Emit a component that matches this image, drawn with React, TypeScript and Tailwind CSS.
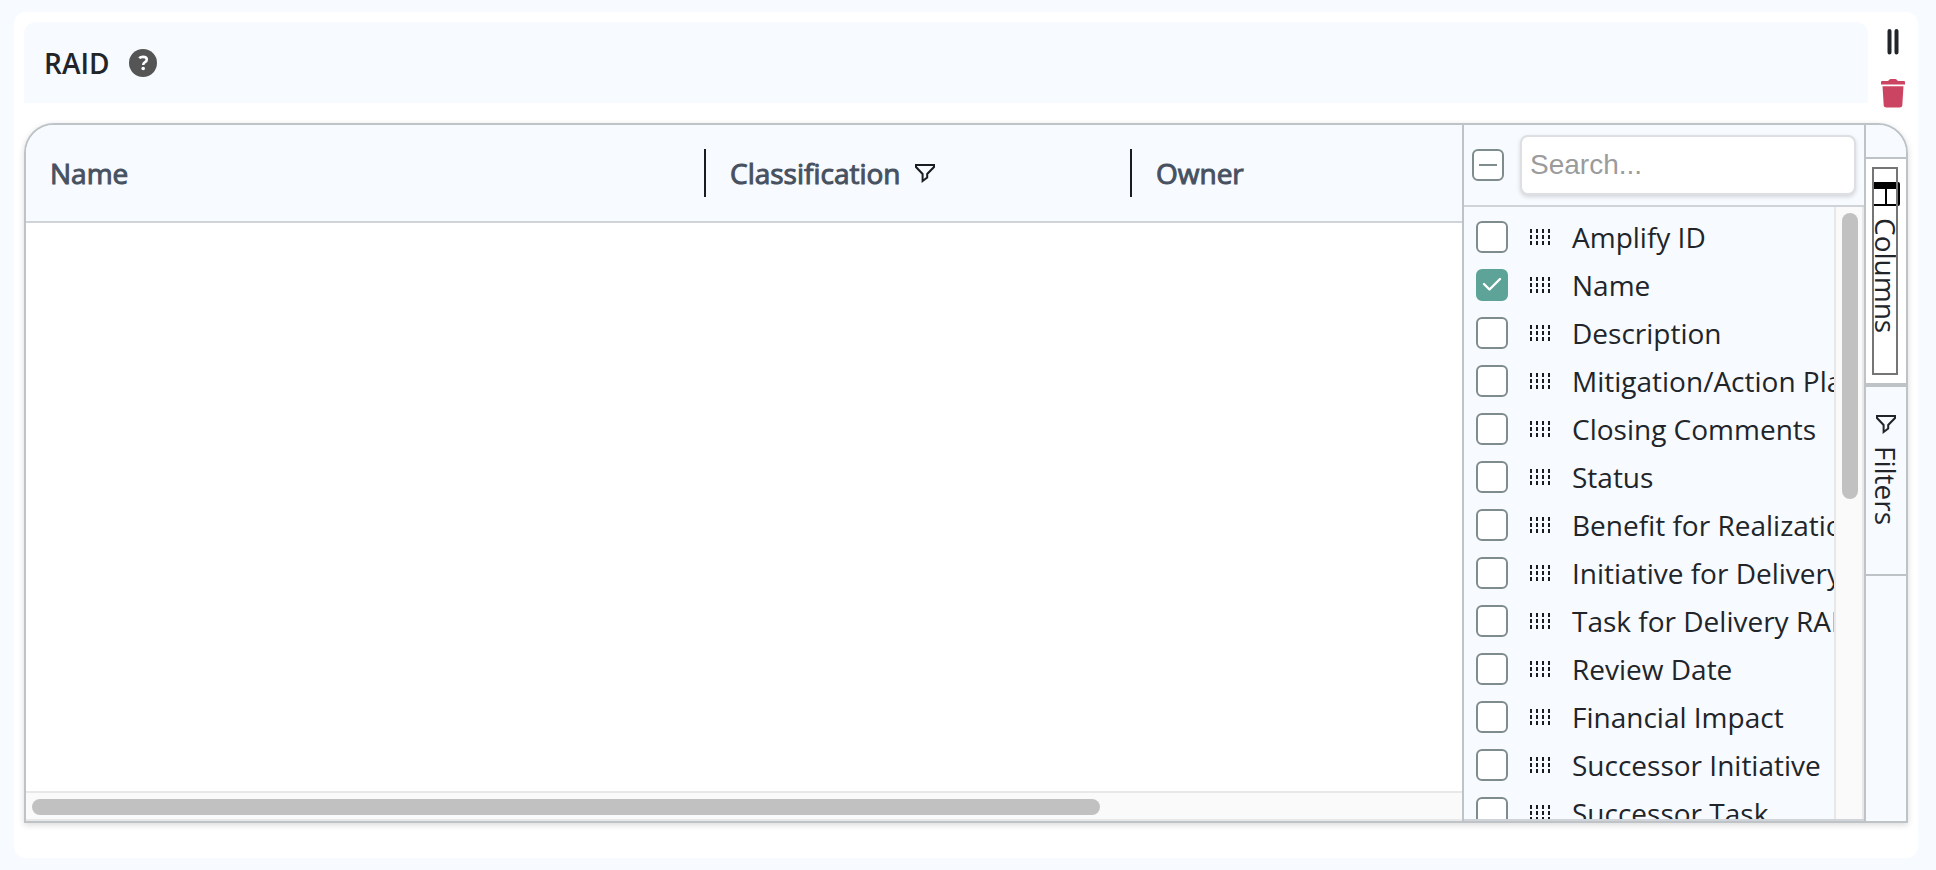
import { useState } from 'react';

interface Field {
  label: string;
  visible: boolean;
}

const FIELDS: Field[] = [
  { label: 'Amplify ID', visible: false },
  { label: 'Name', visible: true },
  { label: 'Description', visible: false },
  { label: 'Mitigation/Action Plan', visible: false },
  { label: 'Closing Comments', visible: false },
  { label: 'Status', visible: false },
  { label: 'Benefit for Realization RAID', visible: false },
  { label: 'Initiative for Delivery RAID', visible: false },
  { label: 'Task for Delivery RAID', visible: false },
  { label: 'Review Date', visible: false },
  { label: 'Financial Impact', visible: false },
  { label: 'Successor Initiative', visible: false },
  { label: 'Successor Task', visible: false },
];

function FilterIcon() {
  return (
    <svg viewBox="0 0 20 20" className="size-5 shrink-0" fill="none" stroke="currentColor" strokeWidth="2" aria-hidden="true">
      <path d="M0 2H20" />
      <path d="M1 2V4L7.600 11V18L12.200 14.600V11L19 4V2" />
    </svg>
  );
}

function ColumnsIcon() {
  return (
    <svg viewBox="0 0 26 24" className="h-6 w-[26px] shrink-0" aria-hidden="true">
      <path d="M0 0H24Q26 0 26 2V22Q26 24 24 24H0V22H11V7H0ZM13 7V22H22V7Z" fillRule="evenodd" />
    </svg>
  );
}

function GripIcon() {
  return (
    <svg viewBox="0 0 20 16" className="h-4 w-5 shrink-0 text-[#181d1f]" aria-hidden="true">
      <path d="M1 0V16M7 0V16M13 0V16M19 0V16" stroke="currentColor" strokeWidth="2" strokeDasharray="4 2" />
    </svg>
  );
}

function TrashIcon() {
  return (
    <svg viewBox="0 0 24 29" className="h-[29px] w-6" fill="currentColor" aria-hidden="true">
      <path d="M1 2H7L8.500 .5Q9 0 9.600 0H14.400Q15 0 15.500 .5L17 2H23Q24 2 24 3V5.500H0V3Q0 2 1 2Z" />
      <path d="M1.500 7.300H22.500L21.300 26.200Q21.100 28.600 18.700 28.600H5.300Q2.900 28.600 2.700 26.200Z" />
    </svg>
  );
}

function Checkbox({ label, checked, onChange }: { label: string; checked: boolean; onChange: () => void }) {
  return (
    <span className="grid size-8 shrink-0">
      <input
        type="checkbox"
        aria-label={label}
        checked={checked}
        onChange={onChange}
        className="col-start-1 row-start-1 size-8 appearance-none rounded-md border-2 border-[#7f8c8d] bg-white checked:border-[#5da398] checked:bg-[#5da398]"
      />
      {checked && (
        <svg viewBox="0 0 32 32" className="pointer-events-none col-start-1 row-start-1 size-8" fill="none" aria-hidden="true">
          <path d="M8 15L13.500 20.500L24 10" stroke="white" strokeWidth="2.400" strokeLinecap="round" strokeLinejoin="round" />
        </svg>
      )}
    </span>
  );
}

export default function App() {
  const [fields, setFields] = useState(FIELDS);
  const [search, setSearch] = useState('');

  const toggle = (label: string) =>
    setFields((list) => list.map((f) => (f.label === label ? { ...f, visible: !f.visible } : f)));

  const toggleAll = () =>
    setFields((list) => {
      const all = list.every((f) => f.visible);
      return list.map((f) => ({ ...f, visible: !all }));
    });

  const shown = fields.filter((f) => f.label.toLowerCase().includes(search.toLowerCase()));

  return (
    <div className="flex h-screen bg-[#f7faff] py-3 pl-3.5 pr-[18px] font-['Open_Sans',sans-serif] text-[28px] leading-9 text-[#212529]">
      <main className="flex min-w-0 flex-1 flex-col rounded-xl bg-white pl-2.5">
        <div className="flex">
          <header className="mb-5 mt-2.5 flex flex-1 items-center gap-5 rounded-t-xl bg-[#f7faff] px-5 pb-[22px] pt-[23px]">
            <h1 className="font-semibold">RAID</h1>
            <button type="button" aria-label="Help" className="text-[#555]">
              <svg viewBox="0 0 28 28" className="size-7" aria-hidden="true">
                <circle cx="14" cy="14" r="14" fill="currentColor" />
                <path d="M10.200 9.200Q11.500 7.900 14 7.900Q17.800 7.900 17.800 10.600Q17.800 12.200 16 13.200Q14.200 14.200 14.200 16" fill="none" stroke="white" strokeWidth="2.600" />
                <circle cx="14.200" cy="19.500" r="1.800" fill="white" />
              </svg>
            </button>
          </header>
          <div className="flex w-[50px] flex-col items-center gap-6 pt-[17px]">
            <button type="button" aria-label="Move">
              <svg viewBox="0 0 12 26" className="h-[26px] w-3" aria-hidden="true">
                <path d="M2.500 2V23.500M9.500 2V23.500" stroke="currentColor" strokeWidth="4" strokeLinecap="round" />
              </svg>
            </button>
            <button type="button" aria-label="Delete" className="text-[#cb4563]">
              <TrashIcon />
            </button>
          </div>
        </div>

        <section className="mb-[35px] mr-2.5 flex min-h-0 flex-1 overflow-hidden rounded-t-[30px] border-2 border-[#bdc3c7] shadow-[0_2px_6px_rgba(0,0,0,0.15)]">
          <div className="flex min-w-0 flex-1 flex-col">
            <table className="w-full table-fixed border-b-2 border-[#d0d3d7] bg-[#f7faff] text-left text-[#475160]">
              <colgroup>
                <col className="w-[680px]" />
                <col className="w-[426px]" />
                <col />
              </colgroup>
              <thead>
                <tr>
                  <th className="py-6 pl-6 font-normal">
                    <div className="flex h-12 items-center border-r-2 border-[#181d1f] [-webkit-text-stroke:1px]">Name</div>
                  </th>
                  <th className="py-6 pl-6 font-normal">
                    <div className="flex h-12 items-center gap-3.5 border-r-2 border-[#181d1f]">
                      <span className="[-webkit-text-stroke:1px]">Classification</span>
                      <button type="button" aria-label="Filter Classification" className="text-[#181d1f]">
                        <FilterIcon />
                      </button>
                    </div>
                  </th>
                  <th className="py-6 pl-6 font-normal">
                    <div className="flex h-12 items-center [-webkit-text-stroke:1px]">Owner</div>
                  </th>
                </tr>
              </thead>
            </table>
            <div className="flex-1" />
            <div className="border-y-2 border-[#e8e8e8] bg-[#fafafa] px-1.5 pb-1 pt-1.5">
              <div className="h-4 w-3/4 rounded-full bg-[#c1c1c1]" />
            </div>
          </div>

          <aside className="flex w-[404px] shrink-0 flex-col border-x-2 border-[#bdc3c7] bg-[#f7faff]">
            <div className="flex items-center gap-4 border-b-2 border-[#d0d3d7] px-2 py-2.5">
              <button
                type="button"
                aria-label="Toggle all columns"
                onClick={toggleAll}
                className="grid size-8 shrink-0 place-items-center rounded-md border-2 border-[#7f8c8d] bg-white"
              >
                <span className="h-0.5 w-[18px] bg-[#7f8c8d]" />
              </button>
              <input
                type="text"
                aria-label="Search columns"
                placeholder="Search..."
                value={search}
                onChange={(e) => setSearch(e.target.value)}
                className="h-[60px] min-w-0 flex-1 rounded-lg border-2 border-[#dddfe2] bg-white px-2 font-['Liberation_Sans',sans-serif] shadow-[0_2px_4px_rgba(0,0,0,0.15)] placeholder:text-[#9b9b9b]"
              />
            </div>
            <div className="flex min-h-0 flex-1 border-b-2 border-[#d0d3d7]">
              <ul className="min-w-0 flex-1 overflow-hidden pl-3 pt-1.5">
                {shown.map((f) => (
                  <li key={f.label} className="flex h-12 items-center gap-[22px] whitespace-nowrap">
                    <Checkbox label={f.label} checked={f.visible} onChange={() => toggle(f.label)} />
                    <GripIcon />
                    <span>{f.label}</span>
                  </li>
                ))}
              </ul>
              <div className="w-[30px] border-x-2 border-[#e8e8e8] bg-[#fafafa] px-1.5 pt-1.5">
                <div className="h-[286px] w-4 rounded-full bg-[#c1c1c1]" />
              </div>
            </div>
          </aside>

          <nav className="w-10 shrink-0 bg-[#f7faff] pt-8">
            <div className="border-b-4 border-t-2 border-[#bdc3c7] bg-white px-1.5 py-2">
              <button
                type="button"
                className="flex h-[208px] w-[26px] flex-col items-start gap-3 px-0.5 pt-[15px] outline-2 -outline-offset-2 outline-[#757575]"
              >
                <ColumnsIcon />
                <span className="w-6 leading-6 [writing-mode:vertical-rl]">Columns</span>
              </button>
            </div>
            <div className="border-b-2 border-[#bdc3c7] px-2">
              <button type="button" className="flex h-[187px] w-6 flex-col items-center gap-3 pt-[27px]">
                <FilterIcon />
                <span className="w-6 leading-6 [writing-mode:vertical-rl]">Filters</span>
              </button>
            </div>
          </nav>
        </section>
      </main>
    </div>
  );
}
